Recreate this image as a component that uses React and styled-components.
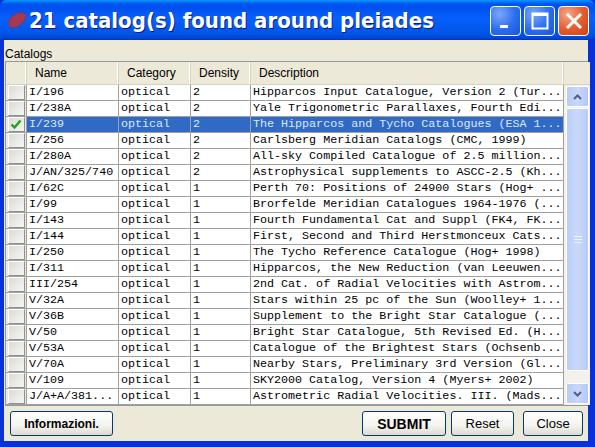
import React from 'react'
import styled, { createGlobalStyle } from 'styled-components'

const GlobalStyle = createGlobalStyle`
  html, body {
    margin: 0;
    padding: 0;
    background: #ece9d8;
  }
  body {
    font-family: "Liberation Sans", Arial, sans-serif;
  }
`

const rows = [
  ['I/196', '2', 'Hipparcos Input Catalogue, Version 2 (Tur...'],
  ['I/238A', '2', 'Yale Trigonometric Parallaxes, Fourth Edi...'],
  ['I/239', '2', 'The Hipparcos and Tycho Catalogues (ESA 1...'],
  ['I/256', '2', 'Carlsberg Meridian Catalogs (CMC, 1999)'],
  ['I/280A', '2', 'All-sky Compiled Catalogue of 2.5 million...'],
  ['J/AN/325/740', '2', 'Astrophysical supplements to ASCC-2.5 (Kh...'],
  ['I/62C', '1', 'Perth 70: Positions of 24900 Stars (Hog+ ...'],
  ['I/99', '1', 'Brorfelde Meridian Catalogues 1964-1976 (...'],
  ['I/143', '1', 'Fourth Fundamental Cat and Suppl (FK4, FK...'],
  ['I/144', '1', 'First, Second and Third Herstmonceux Cats...'],
  ['I/250', '1', 'The Tycho Reference Catalogue (Hog+ 1998)'],
  ['I/311', '1', 'Hipparcos, the New Reduction (van Leeuwen...'],
  ['III/254', '1', '2nd Cat. of Radial Velocities with Astrom...'],
  ['V/32A', '1', 'Stars within 25 pc of the Sun (Woolley+ 1...'],
  ['V/36B', '1', 'Supplement to the Bright Star Catalogue (...'],
  ['V/50', '1', 'Bright Star Catalogue, 5th Revised Ed. (H...'],
  ['V/53A', '1', 'Catalogue of the Brightest Stars (Ochsenb...'],
  ['V/70A', '1', 'Nearby Stars, Preliminary 3rd Version (Gl...'],
  ['V/109', '1', 'SKY2000 Catalog, Version 4 (Myers+ 2002)'],
  ['J/A+A/381...', '1', 'Astrometric Radial Velocities. III. (Mads...'],
]

const SELECTED = 2
const COLS = '21px 92px 72px 60px 313px'

const Window = styled.div`
  width: 595px;
  height: 447px;
  box-sizing: border-box;
  display: flex;
  flex-direction: column;
  background: #0831d9;
  overflow: hidden;
`

const TitleBar = styled.div`
  height: 40px;
  flex: none;
  display: flex;
  align-items: center;
  padding: 0 6px 0 6px;
  box-sizing: border-box;
  background: linear-gradient(#0997ff 0px, #0053ee 4px, #0050ee 8px, #0660ff 18px, #0055e5 34px, #0046d6 38px, #0034c0 40px);
  border-radius: 6px 6px 0 0;
`

const Title = styled.div`
  flex: 1;
  margin-left: 1px;
  color: #fff;
  font-family: "DejaVu Sans Condensed", "DejaVu Sans", Verdana, sans-serif;
  font-weight: bold;
  font-size: 22px;
  text-shadow: 1px 1px 0 #0a1880;
  white-space: nowrap;
`

const Controls = styled.div`
  display: flex;
  gap: 3px;
  margin-top: 2px;
`

const CtlButton = styled.div`
  width: 31px;
  height: 30px;
  box-sizing: border-box;
  border: 1.5px solid #fff;
  border-radius: 4px;
  display: flex;
  align-items: center;
  justify-content: center;
  background: ${p => p.$close
    ? 'radial-gradient(circle at 30% 25%, #f4a78b, #e45a2c 55%, #c8421a)'
    : 'radial-gradient(circle at 30% 25%, #7ba7f8, #2a6df0 55%, #1c55d8)'};
`

const Frame = styled.div`
  flex: 1;
  display: flex;
  flex-direction: column;
  margin: 0 7px 6px 4px;
  background: #ece9d8;
`

const Label = styled.div`
  height: 21px;
  padding: 7px 0 0 1px;
  box-sizing: border-box;
  font-size: 12px;
  line-height: 14px;
  color: #000;
`

const TableBox = styled.div`
  margin-left: 1px;
  border: 1px solid #919b9c;
  border-right: none;
  display: grid;
  grid-template-columns: 558px 26px;
  grid-template-rows: 23px 320px;
  background: #fff;
`

const Header = styled.div`
  display: grid;
  grid-template-columns: ${COLS};
  background: #ece9d8;
  border-bottom: 1px solid #d6d2c2;
`

const HeadCell = styled.div`
  font-size: 12px;
  color: #000;
  padding: 4px 0 0 8px;
  box-sizing: border-box;
  border-right: 1px solid #d8d4c4;
  box-shadow: inset -1px 0 0 #fff;
`

const Corner = styled.div`
  background: #ece9d8;
  border-bottom: 1px solid #d6d2c2;
`

const Body = styled.div`
  display: flex;
  flex-direction: column;
  background: #fff;
`

const Row = styled.div`
  display: grid;
  grid-template-columns: ${COLS};
  height: 16px;
  box-sizing: border-box;
  border-bottom: 1px solid #a0a0a0;
`

const Cell = styled.div`
  font-family: "Liberation Mono", "Courier New", monospace;
  font-size: 11.7px;
  line-height: 15px;
  padding-left: 2px;
  white-space: nowrap;
  overflow: hidden;
  border-right: 1px solid #a0a0a0;
  background: ${p => (p.$sel ? '#316ac5' : '#fff')};
  color: ${p => (p.$sel ? '#dce8ff' : '#000')};
`

const CheckCell = styled.div`
  border-right: 1px solid #a0a0a0;
  background: #ece9d8;
  display: flex;
  align-items: center;
  justify-content: center;
`

const CheckBox = styled.div`
  width: 17px;
  height: 15px;
  box-sizing: border-box;
  border: 1px solid #8e8f8f;
  border-top-color: #fff;
  border-left-color: #fff;
  background: linear-gradient(135deg, #dcdcd6, #f5f5f2);
  display: flex;
  align-items: center;
  justify-content: center;
`

const ScrollBar = styled.div`
  display: flex;
  flex-direction: column;
  background: #f3f1ec;
  padding: 1px 1px 1px 2px;
  gap: 1px;
`

const ScrollBtn = styled.div`
  height: 19px;
  flex: none;
  border: 1px solid #fff;
  border-radius: 2px;
  background: linear-gradient(90deg, #b9cbf3, #c8d8fb 50%, #b4c8f4);
  display: flex;
  align-items: center;
  justify-content: center;
`

const Thumb = styled.div`
  height: 263px;
  flex: none;
  box-sizing: border-box;
  border: 1px solid #fff;
  border-radius: 2px;
  background: linear-gradient(90deg, #bccdf6, #c9d9fc 50%, #b8cbf5);
  display: flex;
  align-items: center;
  justify-content: center;
`

const Track = styled.div`
  flex: 1;
`

const Buttons = styled.div`
  flex: 1;
  display: flex;
  align-items: center;
  padding: 0 5px 0 6px;
`

const Spacer = styled.div`
  flex: 1;
`

const PushButton = styled.button`
  height: 25px;
  width: ${p => p.$w}px;
  margin-left: ${p => p.$gap || 0}px;
  padding: 0;
  border: 1px solid #003c74;
  border-radius: 3px;
  background: linear-gradient(#ffffff, #f3f3ef 60%, #dcdad0);
  font-family: "Liberation Sans", Arial, sans-serif;
  font-size: ${p => p.$size || 13}px;
  font-weight: ${p => (p.$bold ? 'bold' : 'normal')};
  color: #000;
`

function Grip() {
  return (
    <svg width="8" height="7" viewBox="0 0 8 7">
      <path d="M0 0.5h8M0 3.5h8M0 6.5h8" stroke="#eef3ff" strokeWidth="1" />
    </svg>
  )
}

function Arrow({ down }) {
  return (
    <svg width="9" height="6" viewBox="0 0 9 6">
      <path d={down ? 'M1 1l3.5 3.5L8 1' : 'M1 5l3.5-3.5L8 5'} fill="none" stroke="#4d6185" strokeWidth="2" />
    </svg>
  )
}

export default function App() {
  return (
    <Window>
      <GlobalStyle />
      <TitleBar>
        <svg width="22" height="20" viewBox="0 0 22 20">
          <ellipse cx="11" cy="10" rx="10" ry="6" transform="rotate(-35 11 10)" fill="#a7394f" stroke="#5c3f8e" strokeWidth="1.2" />
        </svg>
        <Title>21 catalog(s) found around pleiades</Title>
        <Controls>
          <CtlButton>
            <svg width="20" height="20" viewBox="0 0 20 20"><rect x="4" y="14" width="8" height="3" fill="#fff" /></svg>
          </CtlButton>
          <CtlButton>
            <svg width="20" height="20" viewBox="0 0 20 20"><rect x="2.5" y="2.5" width="15" height="15" fill="none" stroke="#fff" strokeWidth="2" /><rect x="2" y="2" width="16" height="3" fill="#fff" /></svg>
          </CtlButton>
          <CtlButton $close>
            <svg width="20" height="20" viewBox="0 0 20 20"><path d="M3 3L17 17M17 3L3 17" stroke="#fff" strokeWidth="3" /></svg>
          </CtlButton>
        </Controls>
      </TitleBar>
      <Frame>
        <Label>Catalogs</Label>
        <TableBox>
          <Header>
            <HeadCell />
            <HeadCell>Name</HeadCell>
            <HeadCell>Category</HeadCell>
            <HeadCell>Density</HeadCell>
            <HeadCell>Description</HeadCell>
          </Header>
          <Corner />
          <Body>
            {rows.map((r, i) => {
              const sel = i === SELECTED
              return (
                <Row key={r[0]}>
                  <CheckCell>
                    <CheckBox>
                      {sel && (
                        <svg width="12" height="11" viewBox="0 0 12 11">
                          <path d="M1.5 5.5l3 3L10.5 1.5" fill="none" stroke="#21a121" strokeWidth="2.4" />
                        </svg>
                      )}
                    </CheckBox>
                  </CheckCell>
                  <Cell $sel={sel}>{r[0]}</Cell>
                  <Cell $sel={sel}>optical</Cell>
                  <Cell $sel={sel}>{r[1]}</Cell>
                  <Cell $sel={sel}>{r[2]}</Cell>
                </Row>
              )
            })}
          </Body>
          <ScrollBar>
            <ScrollBtn><Arrow /></ScrollBtn>
            <Thumb><Grip /></Thumb>
            <Track />
            <ScrollBtn><Arrow down /></ScrollBtn>
          </ScrollBar>
        </TableBox>
        <Buttons>
          <PushButton $w={103} $bold $size={12}>Informazioni.</PushButton>
          <Spacer />
          <PushButton $w={84} $bold $size={14}>SUBMIT</PushButton>
          <PushButton $w={63} $gap={5} $size={13}>Reset</PushButton>
          <PushButton $w={60} $gap={9} $size={13}>Close</PushButton>
        </Buttons>
      </Frame>
    </Window>
  )
}
